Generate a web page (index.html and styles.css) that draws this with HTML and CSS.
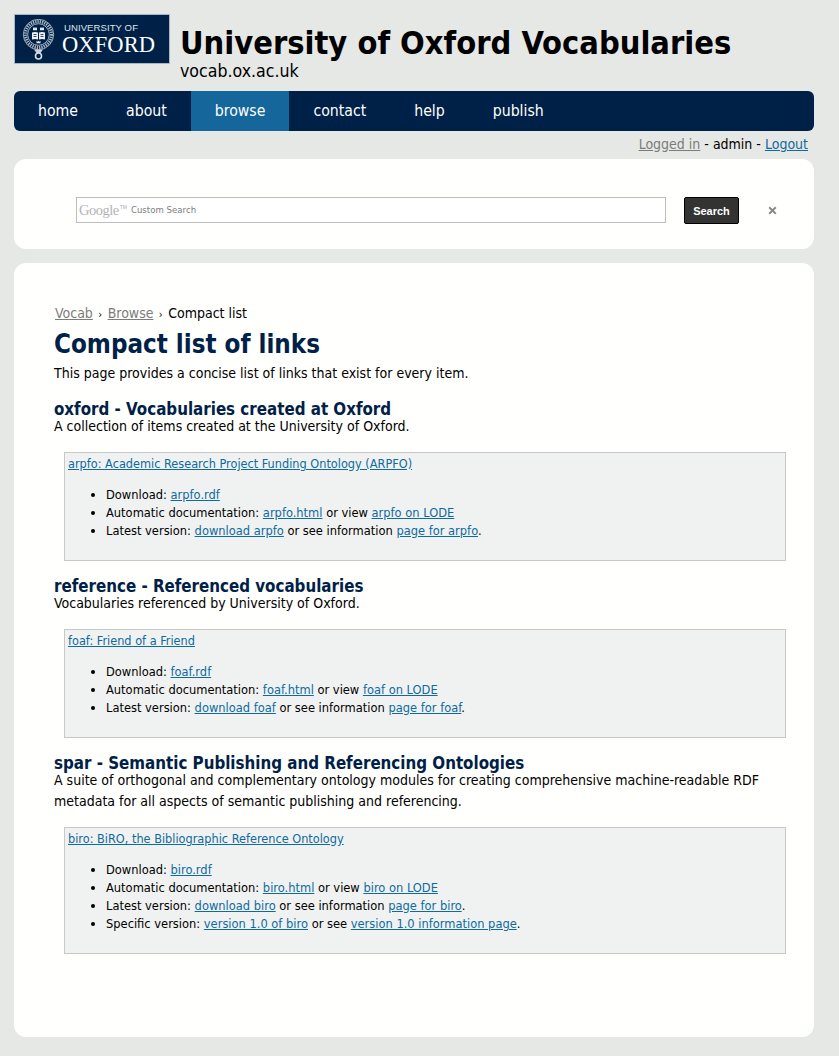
FILE: index.html
```html
<!DOCTYPE html>
<html lang="en">
<head>
<meta charset="utf-8">
<title>University of Oxford Vocabularies</title>
<link rel="stylesheet" href="styles.css">
</head>
<body>
<header class="masthead">
  <div class="logo">
    <svg class="seal" width="34" height="42" viewBox="0 0 34 42">
      <circle cx="16.500" cy="15.500" r="15.200" fill="none" stroke="#e3e7ec" stroke-width=".7"/>
      <circle cx="16.500" cy="15.500" r="13" fill="none" stroke="#aab6c6" stroke-width="3.200" stroke-dasharray="1.300 1"/>
      <circle cx="16.500" cy="15.500" r="10.800" fill="none" stroke="#e3e7ec" stroke-width=".7"/>
      <path d="M10 13.500c2-.8 4-.8 6 0v7c-2-.8-4-.8-6 0zM17 13.500c2-.8 4-.8 6 0v7c-2-.8-4-.8-6 0z" fill="#eef1f4"/>
      <path d="M11.500 15.500h3M11.500 17.500h3M18.500 15.500h3M18.500 17.500h3" stroke="#002147" stroke-width=".8"/>
      <path d="M11 8l1 1.300 1-1.300 1 1.300 1-1.300v3.200h-4zM18 8l1 1.300 1-1.300 1 1.300 1-1.300v3.200h-4zM14.500 21.800l1 1 1-1 1 1 1-1v2.400h-4z" fill="#e3e7ec"/>
      <path d="M12 30.500h9l-2.500 3.500h-4z" fill="#c9d1dc"/>
      <circle cx="16.500" cy="37" r="3" fill="none" stroke="#d5dbe3" stroke-width="1.600"/>
    </svg>
    <div class="wordmark">
      <span class="wm-top">UNIVERSITY OF</span>
      <span class="wm-main">OXFORD</span>
    </div>
  </div>
  <div class="site-title">
    <div class="site-name">University of Oxford Vocabularies</div>
    <div class="site-url">vocab.ox.ac.uk</div>
  </div>
</header>
<nav class="mainnav">
  <a href="#">home</a>
  <a href="#">about</a>
  <a href="#" class="active">browse</a>
  <a href="#">contact</a>
  <a href="#">help</a>
  <a href="#">publish</a>
</nav>
<div class="userline"><a href="#" class="grey">Logged in</a> - admin - <a href="#">Logout</a></div>
<section class="card searchcard">
  <div class="gsearch"><span class="g-logo">Google</span><sup class="g-tm">TM</sup><span class="g-text">Custom Search</span></div>
  <button class="gbtn" type="button">Search</button>
  <svg class="gclear" width="9" height="9" viewBox="0 0 9 9"><path d="M1.200 1.200l6.600 6.600M7.800 1.200l-6.600 6.600" stroke="#8a8a8a" stroke-width="2"/></svg>
</section>
<main class="card content">
  <div class="crumbs"><a href="#" class="grey">Vocab</a><span class="sep">›</span><a href="#" class="grey">Browse</a><span class="sep">›</span>Compact list</div>
  <h1>Compact list of links</h1>
  <p class="intro">This page provides a concise list of links that exist for every item.</p>

  <h2>oxford - Vocabularies created at Oxford</h2>
  <p class="desc">A collection of items created at the University of Oxford.</p>
  <div class="item">
    <a href="#">arpfo: Academic Research Project Funding Ontology (ARPFO)</a>
    <ul>
      <li>Download: <a href="#">arpfo.rdf</a></li>
      <li>Automatic documentation: <a href="#">arpfo.html</a> or view <a href="#">arpfo on LODE</a></li>
      <li>Latest version: <a href="#">download arpfo</a> or see information <a href="#">page for arpfo</a>.</li>
    </ul>
  </div>

  <h2>reference - Referenced vocabularies</h2>
  <p class="desc">Vocabularies referenced by University of Oxford.</p>
  <div class="item">
    <a href="#">foaf: Friend of a Friend</a>
    <ul>
      <li>Download: <a href="#">foaf.rdf</a></li>
      <li>Automatic documentation: <a href="#">foaf.html</a> or view <a href="#">foaf on LODE</a></li>
      <li>Latest version: <a href="#">download foaf</a> or see information <a href="#">page for foaf</a>.</li>
    </ul>
  </div>

  <h2>spar - Semantic Publishing and Referencing Ontologies</h2>
  <p class="desc">A suite of orthogonal and complementary ontology modules for creating comprehensive machine-readable RDF metadata for all aspects of semantic publishing and referencing.</p>
  <div class="item">
    <a href="#">biro: BiRO, the Bibliographic Reference Ontology</a>
    <ul>
      <li>Download: <a href="#">biro.rdf</a></li>
      <li>Automatic documentation: <a href="#">biro.html</a> or view <a href="#">biro on LODE</a></li>
      <li>Latest version: <a href="#">download biro</a> or see information <a href="#">page for biro</a>.</li>
      <li>Specific version: <a href="#">version 1.0 of biro</a> or see <a href="#">version 1.0 information page</a>.</li>
    </ul>
  </div>
</main>
</body>
</html>
```
FILE: styles.css
```css
* { box-sizing: border-box; }
html, body { margin: 0; padding: 0; }
body {
  background: #e6e8e6;
  color: #000;
  font-family: "DejaVu Sans Condensed", "DejaVu Sans", Verdana, sans-serif;
  font-stretch: condensed;
  font-size: 14px;
  padding: 14px 25px 19px 14px;
  height: 1056px;
  overflow: hidden;
}
a { color: #0f6aa0; text-decoration: underline; }
a.grey { color: #7c7c7c; }

.masthead { display: flex; height: 77px; }
.logo {
  width: 156px; height: 50px;
  background: #002147;
  border: 1px solid #a9b5c4;
  display: flex; align-items: flex-start;
  padding: 4px 0 0 7px;
  gap: 6px;
}
.wordmark { display: flex; flex-direction: column; color: #fff; padding-top: 3px; }
.wm-top { font: 9.6px/12px "Liberation Sans", Arial, sans-serif; letter-spacing: .05px; color: #dfe4ea; padding-left: 2px; }
.wm-main { font: 22.5px/22px "Liberation Serif", "Times New Roman", serif; letter-spacing: .1px; }
.site-title { margin-left: 10px; }
.site-name { font-size: 32.3px; font-weight: bold; line-height: 38px; margin-top: 10px; }
.site-url { font-size: 17.6px; line-height: 18px; }

.mainnav {
  display: flex; height: 40px;
  background: #002147;
  border-radius: 6px;
  overflow: hidden;
}
.mainnav a {
  color: #fff; text-decoration: none;
  font-size: 15.7px; line-height: 39px;
  padding: 0 24px;
}
.mainnav a.active { background: #15679b; }

.userline { text-align: right; line-height: 26px; height: 28px; padding-right: 6px; }

.card { background: #fffffd; border-radius: 12px; }
.searchcard {
  height: 90px; display: flex; align-items: flex-start;
  padding: 38px 0 0 62px;
  margin-bottom: 14px;
}
.gsearch {
  width: 590px; height: 26px;
  border: 1px solid #bdbdbd;
  background: #fff;
  display: flex; align-items: center;
  padding-left: 2px;
  color: #8e8e8e;
}
.g-logo { font: 14.5px "Liberation Serif", serif; color: #b4b4b4; letter-spacing: -.5px; }
.g-tm { font: 5px "Liberation Sans", sans-serif; color: #aaa; align-self: flex-start; margin: 6px 4px 0 1px; }
.g-text { font: 8.6px "DejaVu Sans", sans-serif; color: #808080; }
.gbtn {
  margin-left: 18px; width: 55px; height: 27px;
  background: #333331; color: #fff;
  border: 1px solid #000; border-radius: 2px;
  font: bold 11px "Liberation Sans", Arial, sans-serif;
  padding: 0;
}
.gclear { margin: 9px 0 0 29px; }

.content { height: 774px; padding: 40px 28px 0 40px; }
.crumbs { line-height: 20px; padding-left: 1px; }
.sep { margin: 0 5.4px; font-size: 11px; }
h1 { color: #002147; font-size: 25.7px; line-height: 32px; margin: 3px 0 3px; }
.intro { margin: 0 0 19px; line-height: 20px; }
h2 { color: #002147; font-size: 16.8px; line-height: 14px; margin: 0; }
.desc { margin: 0 0 15px; line-height: 21px; }
.item {
  margin: 0 0 18px 10px;
  background: #f0f2f1;
  border: 1px solid #c8c8c8;
  padding: 2px 3px 0;
  font-size: 12.6px;
  line-height: 18px;
}
.item ul { margin: 13px 0 20px; padding-left: 38px; font-size: 12.75px; }
```
